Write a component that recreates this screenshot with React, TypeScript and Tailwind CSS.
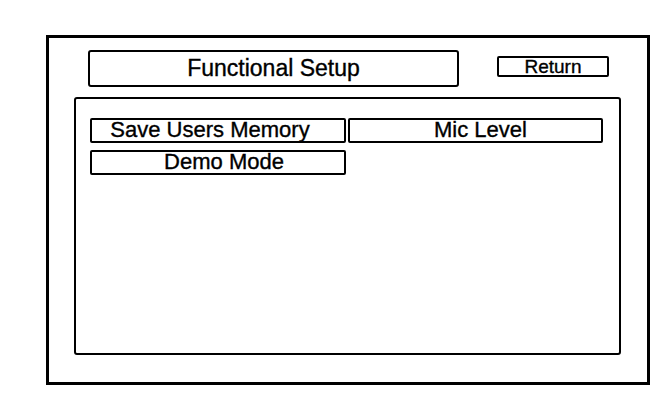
export default function App() {
  const font = { fontFamily: '"Liberation Sans", Arial, sans-serif' };

  return (
    <div className="w-[672px] h-[394px] bg-white text-black overflow-hidden [-webkit-text-stroke:0.35px_black]" style={font}>
      <div className="ml-[46px] mt-[35px] w-[604px] h-[350px] border-[3px] border-black flex flex-col">
        {/* Header */}
        <div className="flex items-start ml-[39px] mt-[12px]">
          <div className="w-[371px] h-[37px] border-2 border-black rounded-[3px] flex items-center justify-center text-[23px] leading-none">
            Functional Setup
          </div>
          <button className="ml-[38px] mt-[6px] w-[112px] h-[21px] border-2 border-black rounded-[2px] flex items-center justify-center text-[19px] leading-none">
            Return
          </button>
        </div>

        {/* Options panel */}
        <div className="ml-[25px] mt-[10px] w-[547px] h-[258px] border-2 border-black rounded-[3px] pl-[14px] pt-[19px]">
          <div className="grid grid-cols-[256px_255px] gap-x-[2px] gap-y-[7px]">
            <button className="h-[25px] border-2 border-black rounded-[2px] flex items-center justify-center pr-[16px] pb-[2px] text-[22px] leading-none">
              Save Users Memory
            </button>
            <button className="h-[25px] border-2 border-black rounded-[2px] flex items-center justify-center pl-[10px] pb-[2px] text-[22px] leading-none">
              Mic Level
            </button>
            <button className="h-[25px] border-2 border-black rounded-[2px] flex items-center justify-center pl-[12px] pb-[2px] text-[22px] leading-none">
              Demo Mode
            </button>
          </div>
        </div>
      </div>
    </div>
  );
}
